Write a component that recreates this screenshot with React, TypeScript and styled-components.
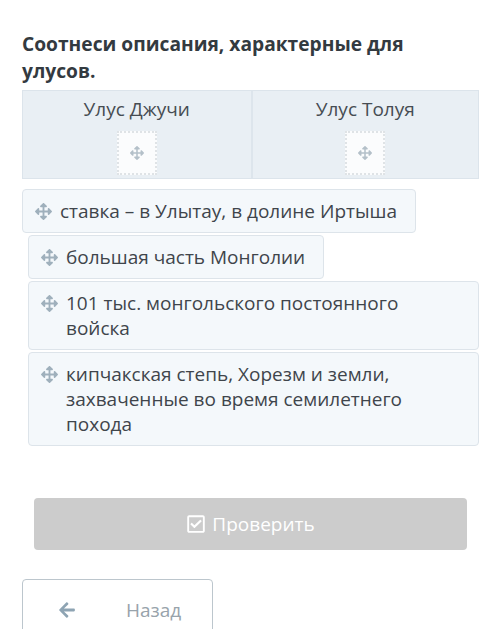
import React from 'react';
import styled, { createGlobalStyle } from 'styled-components';
import { FaArrowsAlt, FaRegCheckSquare, FaArrowLeft } from 'react-icons/fa';

const GlobalStyle = createGlobalStyle`
  html, body {
    margin: 0;
    padding: 0;
    background: #ffffff;
    font-family: "Open Sans", "Noto Sans", sans-serif;
  }
`;

const Page = styled.div`
  width: 500px;
  height: 629px;
  overflow: hidden;
  box-sizing: border-box;
  padding: 30px 21px 0 22px;
`;

const Title = styled.h2`
  margin: 0 0 6px;
  font-size: 19.2px;
  line-height: 27px;
  font-weight: 700;
  color: #333a40;
  padding-right: 30px;
`;

const Table = styled.div`
  display: grid;
  grid-template-columns: 1fr 1fr;
  border: 1px solid #dce4eb;
  background: #e9eff4;
`;

const Column = styled.div<{ $divider?: boolean }>`
  display: flex;
  flex-direction: column;
  align-items: center;
  padding: 5px 0 3px;
  border-left: ${p => (p.$divider ? '2px solid #dde5ec' : 'none')};
`;

const ColumnTitle = styled.div`
  font-size: 19px;
  line-height: 26px;
  color: #464c52;
`;

const DropZone = styled.div`
  width: 36px;
  height: 40px;
  margin-top: 9px;
  background: #fbfcfd;
  border: 2px dotted #dfe3e6;
  display: flex;
  align-items: center;
  justify-content: center;
  color: #b4c0c9;
`;

const Items = styled.div`
  display: flex;
  flex-direction: column;
  align-items: flex-start;
  gap: 2px;
  margin-top: 10px;
`;

const Item = styled.div<{ $indent?: boolean; $wide?: boolean }>`
  display: flex;
  align-items: flex-start;
  gap: 8px;
  box-sizing: border-box;
  margin-left: ${p => (p.$indent ? '6px' : '0')};
  align-self: ${p => (p.$wide ? 'stretch' : 'flex-start')};
  padding: 8.5px 18px 8.5px 12px;
  background: #f4f8fb;
  border: 1px solid #dde4ea;
  border-radius: 4px;
  font-size: 19px;
  line-height: 25px;
  color: #3f454b;
`;

const Grip = styled.span`
  display: flex;
  height: 25px;
  align-items: center;
  color: #9fb0bc;
  flex: none;
`;

const CheckButton = styled.button`
  display: flex;
  align-items: center;
  justify-content: center;
  gap: 6px;
  width: 433px;
  height: 52px;
  margin: 52px 0 0 12px;
  border: none;
  border-radius: 4px;
  background: #cccccc;
  color: #ffffff;
  font-family: inherit;
  font-size: 19px;
`;

const BackButton = styled.button`
  display: flex;
  align-items: center;
  width: 191px;
  height: 62px;
  margin-top: 29px;
  padding: 0 0 0 35px;
  box-sizing: border-box;
  background: #ffffff;
  border: 1px solid #bcc6cd;
  border-radius: 4px;
  color: #98a3ab;
  font-family: inherit;
  font-size: 19px;
`;

const BackArrow = styled.span`
  display: flex;
  color: #8ea4b3;
  margin-right: 50px;
`;

const columns = ['Улус Джучи', 'Улус Толуя'];

const items = [
  { text: 'ставка – в Улытау, в долине Иртыша', indent: false, wide: false },
  { text: 'большая часть Монголии', indent: true, wide: false },
  { text: '101 тыс. монгольского постоянного войска', indent: true, wide: true },
  {
    text: 'кипчакская степь, Хорезм и земли, захваченные во время семилетнего похода',
    indent: true,
    wide: true,
  },
];

export default function App() {
  return (
    <Page>
      <GlobalStyle />
      <Title>Соотнеси описания, характерные для улусов.</Title>
      <Table>
        {columns.map((name, i) => (
          <Column key={name} $divider={i > 0}>
            <ColumnTitle>{name}</ColumnTitle>
            <DropZone>
              <FaArrowsAlt size={14} />
            </DropZone>
          </Column>
        ))}
      </Table>
      <Items>
        {items.map(item => (
          <Item key={item.text} $indent={item.indent} $wide={item.wide}>
            <Grip>
              <FaArrowsAlt size={17} />
            </Grip>
            <span>{item.text}</span>
          </Item>
        ))}
      </Items>
      <CheckButton>
        <FaRegCheckSquare size={20} />
        Проверить
      </CheckButton>
      <BackButton>
        <BackArrow>
          <FaArrowLeft size={18} />
        </BackArrow>
        Назад
      </BackButton>
    </Page>
  );
}
